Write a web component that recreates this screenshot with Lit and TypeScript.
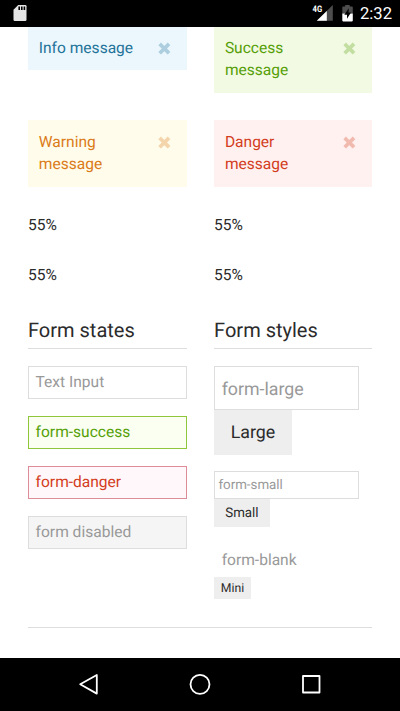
import { LitElement, html, css, svg } from "lit";
import { customElement, property } from "lit/decorators.js";

@customElement("status-bar")
class StatusBar extends LitElement {
  static styles = css`
    :host {
      display: flex;
      flex: none;
      align-items: center;
      height: 26.5px;
      padding: 0 9.5px 0 13px;
      box-sizing: border-box;
      background: #000;
      color: #fff;
    }
    svg { display: block; flex: none; }
    .gap { flex: 1; }
    .signal { margin-right: 9px; }
    .net { font: 700 9px Roboto, sans-serif; fill: #fff; }
    .battery { margin-right: 7px; }
    .time { font-size: 16.6px; line-height: 26px; font-weight: 400; padding-top: 3px; width: 30.5px; white-space: nowrap; }
  `;
  render() {
    return html`
      <svg width="14" height="18" viewBox="0 0 14 18">
        <path d="M5.2 1H12.2Q13.5 1 13.5 2.3V15.7Q13.5 17 12.2 17H1.8Q.5 17 .5 15.7V5.7Z" fill="#e6e6e6" />
        <path d="M5.4 2.6h1.6v3.4H5.4zM8 2.6h1.6v3.4H8zM10.6 2.6h1.6v3.4h-1.6z" fill="#000" />
      </svg>
      <span class="gap"></span>
      <svg class="signal" width="21" height="18" viewBox="0 0 21 18">
        <path d="M20.8 1V16.7H4.8Z" fill="#4d4d4d" />
        <path d="M14.8 6.9V16.7H4.8Z" fill="#fff" />
        <path d="M0 0H11V9.3H0Z" fill="#000" />
        <text class="net" x="0.6" y="8.3" textLength="9.6" lengthAdjust="spacingAndGlyphs">4G</text>
      </svg>
      <svg class="battery" width="11" height="18" viewBox="0 0 11 18">
        <path d="M3.2 1h4.5v1.6h2.3q.8 0 .8.8V9.6H.3V3.4q0-.8.8-.8h2.1z" fill="#4d4d4d" />
        <path d="M.3 9.6h10.5v7q0 .8-.8.8H1.1q-.8 0-.8-.8z" fill="#fff" />
        <path d="M6.8 4.2L2.3 10.8H5V14.8L9 8.6H6.5Z" fill="#000" />
      </svg>
      <span class="time">2:32</span>
    `;
  }
}

@customElement("alert-box")
class AlertBox extends LitElement {
  @property() text = "";
  static styles = css`
    :host {
      display: flex;
      align-items: flex-start;
      justify-content: space-between;
      box-sizing: border-box;
      padding: 10.6px 16px 11.6px 10.8px;
      line-height: 22.2px;
    }
    .label { max-width: 105px; }
    svg { flex: none; margin-top: 5px; opacity: 0.3; }
  `;
  render() {
    return html`
      <span class="label">${this.text}</span>
      <svg width="13" height="13" viewBox="0 0 13 13">
        <path d="M3 3.2L9.7 9.9M9.7 3.2L3 9.9" stroke="currentColor" stroke-width="3.7" stroke-linecap="square" stroke-linejoin="round" />
      </svg>
    `;
  }
}

@customElement("nav-bar")
class NavBar extends LitElement {
  static styles = css`
    :host {
      display: flex;
      flex: none;
      justify-content: center;
      gap: 87px;
      height: 53.5px;
      box-sizing: border-box;
      padding-top: 14.5px;
      background: #000;
    }
    svg { display: block; }
  `;
  private icon(shape: unknown) {
    return html`<svg width="24" height="24" viewBox="0 0 24 24" fill="none" stroke="#fff" stroke-width="1.8" stroke-linejoin="round">${shape}</svg>`;
  }
  render() {
    return html`
      ${this.icon(svg`<path d="M3.2 12.3L19.8 3V21.6Z" />`)}
      ${this.icon(svg`<circle cx="12" cy="12.3" r="9.5" />`)}
      ${this.icon(svg`<rect x="4" y="4" width="16.5" height="16.5" />`)}
    `;
  }
}

@customElement("app-root")
class AppRoot extends LitElement {
  static styles = css`
    :host {
      display: flex;
      flex-direction: column;
      height: 711px;
      overflow: hidden;
      background: #fff;
      color: #2b2b2b;
      font-family: Roboto, sans-serif;
      font-size: 15.56px;
      line-height: 22.2px;
      text-rendering: geometricPrecision;
    }
    .content {
      flex: 1;
      min-height: 0;
      overflow: hidden;
      padding: 0 28px;
    }
    .grid {
      display: grid;
      grid-template-columns: 158.6px 157.9px;
      column-gap: 27.5px;
      row-gap: 27.8px;
      align-items: start;
      margin-top: -0.6px;
    }
    .info { background: #ebf7fd; color: #1f7399; }
    .success { background: #f2fae3; color: #569f08; }
    .warning { background: #fffceb; color: #db7b18; }
    .danger { background: #fff1f0; color: #d33d1d; }
    .percent { height: 22.2px; line-height: 21px; }
    .legend {
      height: 33.3px;
      line-height: 31px;
      font-size: 20px;
      border-bottom: 1px solid #ddd;
      margin-bottom: 17px;
    }
    .field {
      display: flex;
      align-items: center;
      box-sizing: border-box;
      height: 33.3px;
      padding: 0 6.6px 1px;
      border: 1px solid #ddd;
      color: #999;
    }
    .stack { display: flex; flex-direction: column; gap: 16.7px; }
    .ok { border-color: #8ec73b; background: #fafff2; color: #569f08; }
    .bad { border-color: #dc8d99; background: #fff7f9; color: #d33d1d; }
    .off { background: #f5f5f5; }
    .row { display: flex; flex-direction: column; align-items: flex-start; }
    .row .field { width: 144.8px; }
    .row .field.large { height: 44.4px; font-size: 17.78px; padding-top: 3px; padding-bottom: 0; }
    .row .field.small { height: 27.8px; font-size: 13.33px; padding: 2.5px 3.3px 0; }
    .row .field.blank { border-color: transparent; padding-bottom: 1px; }
    .button {
      display: flex;
      align-items: center;
      justify-content: center;
      box-sizing: border-box;
      background: #eee;
    }
    .b-large { width: 77.8px; height: 44.4px; font-size: 17.78px; padding-top: 1.5px; }
    .b-small { width: 55.6px; height: 27.8px; font-size: 13.33px; padding-top: 1px; }
    .b-mini { width: 36.8px; height: 22.2px; font-size: 12.22px; padding-bottom: 1px; }
    .rule { height: 1px; background: #ddd; margin-top: 28px; }
  `;
  render() {
    return html`
      <status-bar></status-bar>
      <main class="content">
        <div class="grid">
          <alert-box class="info" text="Info message"></alert-box>
          <alert-box class="success" text="Success message"></alert-box>
          <alert-box class="warning" text="Warning message"></alert-box>
          <alert-box class="danger" text="Danger message"></alert-box>
          ${[0, 1, 2, 3].map(() => html`<div class="percent">55%</div>`)}
          <section>
            <div class="legend">Form states</div>
            <div class="stack">
              <div class="field">Text Input</div>
              <div class="field ok">form-success</div>
              <div class="field bad">form-danger</div>
              <div class="field off">form disabled</div>
            </div>
          </section>
          <section>
            <div class="legend">Form styles</div>
            <div class="stack">
              <div class="row">
                <div class="field large">form-large</div>
                <div class="button b-large">Large</div>
              </div>
              <div class="row">
                <div class="field small">form-small</div>
                <div class="button b-small">Small</div>
              </div>
              <div class="row">
                <div class="field blank">form-blank</div>
                <div class="button b-mini">Mini</div>
              </div>
            </div>
          </section>
        </div>
        <div class="rule"></div>
      </main>
      <nav-bar></nav-bar>
    `;
  }
}
